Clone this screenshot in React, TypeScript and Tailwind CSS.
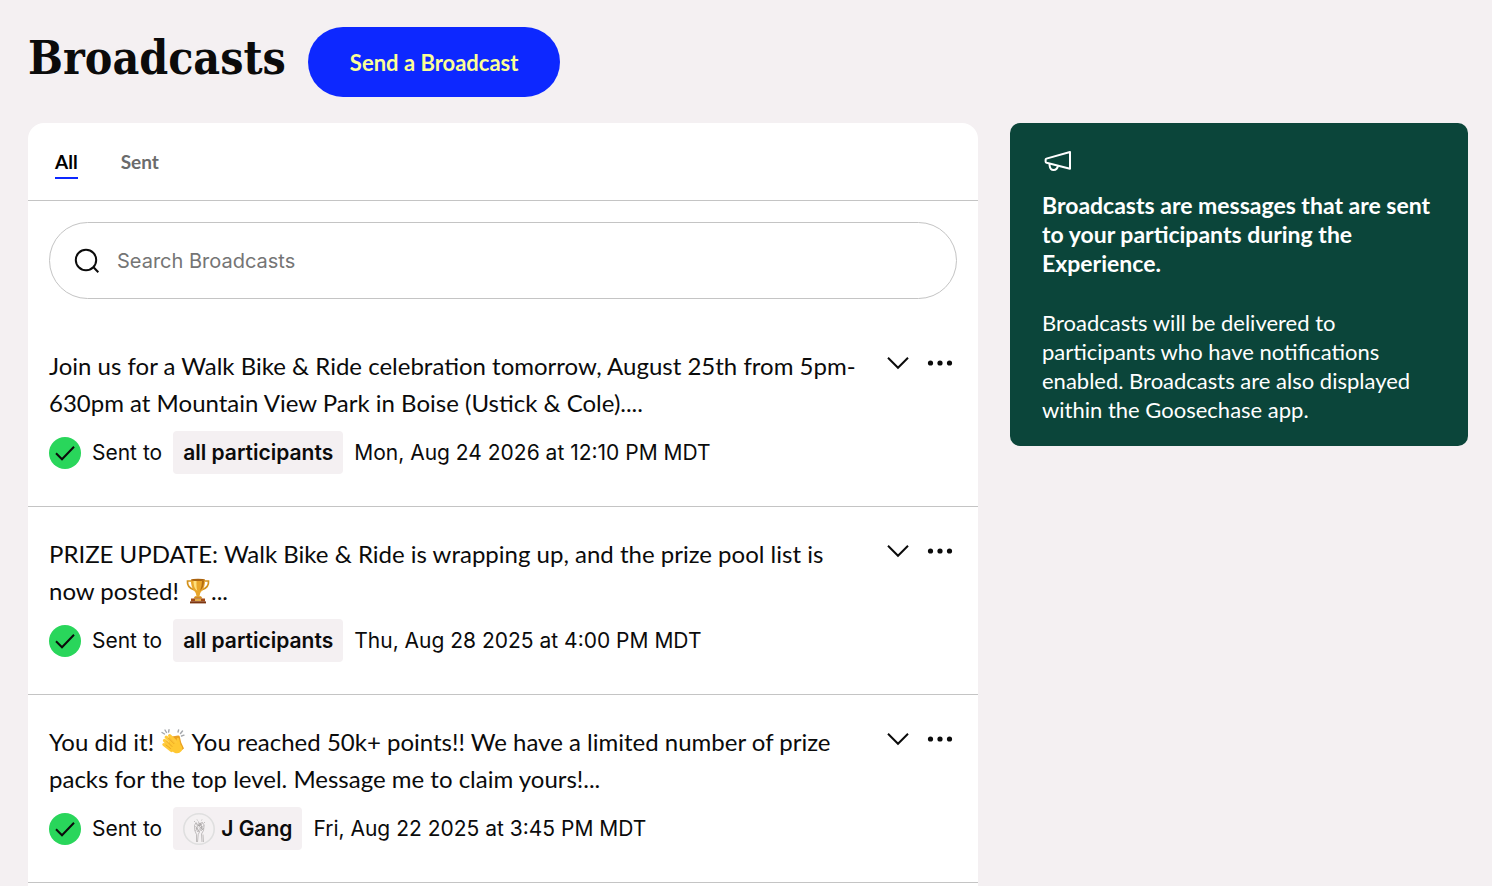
import { ReactNode } from "react";
import clsx from "clsx";

type IconProps = { className?: string };

const SearchIcon = ({ className }: IconProps) => (
  <svg viewBox="0 0 26 26" fill="none" stroke="currentColor" strokeWidth="2" className={className} aria-hidden="true">
    <circle cx="12" cy="12" r="10.2" />
    <path d="M19.5 19.3 24.3 24.3" />
  </svg>
);

const ChevronIcon = ({ className }: IconProps) => (
  <svg viewBox="0 0 22 14" fill="none" stroke="currentColor" strokeWidth="2" className={className} aria-hidden="true">
    <path d="M1 1.8 11 11.8 21 1.8" />
  </svg>
);

const DotsIcon = ({ className }: IconProps) => (
  <svg viewBox="0 0 26 6" fill="currentColor" className={className} aria-hidden="true">
    <circle cx="3.5" cy="3" r="2.6" />
    <circle cx="13" cy="3" r="2.6" />
    <circle cx="22.5" cy="3" r="2.6" />
  </svg>
);

const CheckIcon = ({ className }: IconProps) => (
  <svg viewBox="0 0 32 32" fill="none" className={className} aria-hidden="true">
    <circle cx="16" cy="16" r="16" fill="#29d65b" />
    <path d="M7 16.3 13 22.3 25 9.7" stroke="#0b0b0b" strokeWidth="2" />
  </svg>
);

const MegaphoneIcon = ({ className }: IconProps) => (
  <svg viewBox="0 0 28 22" fill="none" stroke="currentColor" strokeWidth="2" strokeLinejoin="round" className={className} aria-hidden="true">
    <path d="M26 2 2.4 8.6Q1.6 8.9 1.6 9.8V11.4Q1.6 12.4 2.6 12.7L26 18.8Z" />
    <path d="M5.6 13.6V15.6Q6.2 20 9.6 20 13.2 20 14 15.8" />
  </svg>
);

const Trophy = () => (
  <svg viewBox="0 0 24 26" className="inline-block h-[26px] w-[26px] align-[-4px]" role="img" aria-label="Trophy">
    <path d="M5.5 3H1.5Q.8 9.5 8.4 12M18.5 3H22.5Q23.2 9.5 15.6 12" fill="none" stroke="#d3921c" strokeWidth="1.7" />
    <path d="M5 1.5H19Q19.4 9.5 15.5 13.2 13.4 15 13.4 18.5H10.6Q10.6 15 8.5 13.2 4.6 9.5 5 1.5Z" fill="#e9a62a" />
    <path d="M7.5 3H10.5Q10.2 10 11.4 13 7.4 10.5 7.5 3Z" fill="#ffe07c" />
    <path d="M16 3H18Q18 9.5 14 13 16 8 16 3Z" fill="#b46d12" />
    <ellipse cx="12" cy="1.9" rx="7" ry="1.2" fill="#a96310" />
    <path d="M9 18.2H15L16.5 20.5H7.5Z" fill="#d58c1c" />
    <path d="M5 20.5H19V23.5H5Z" fill="#a34a16" />
    <path d="M9 21.2H15V22.8H9Z" fill="#f1c452" />
    <path d="M4 23.4H20V25.4H4Z" fill="#7c3510" />
  </svg>
);

const Clap = () => (
  <svg viewBox="0 0 24 26" className="inline-block h-[26px] w-[26px] align-[-4px]" role="img" aria-label="Clapping hands">
    <path d="M1 3.5 3.5 5M4 1 5.5 3.5M8 .8 7.6 3M17 3 17.6 1M19.5 4.5 21.5 2M20.5 7 23 6.2" stroke="#a3a6aa" strokeWidth="1.4" strokeLinecap="round" />
    <path d="M17 6.5Q18.8 6 19 8.5L20.2 13.5 23 19.5 17 24 8 17 8 8Z" fill="#eaa123" />
    <path d="M3.5 11.5 11.5 19.5M2.9 15.6 10.5 21.5M5.2 8.2 14 17M8.6 6.6 16.5 14.5" stroke="#ffca3a" strokeWidth="3.2" strokeLinecap="round" />
    <path d="M16 14.5 15.7 10Q16.5 7.6 18 9.6L19.5 15.5Q22.5 19 20.5 22 17.5 25.8 13 23.5L8 20 9 12Z" fill="#ffc832" />
    <path d="M5.5 12 11 17.5M7.5 9.2 13 14.7M5 16 9.5 19.5" stroke="#e39a1d" strokeWidth=".7" strokeLinecap="round" />
  </svg>
);

// Team picture: a faint pencil sketch of two raised hands
const TeamAvatar = () => (
  <svg viewBox="0 0 32 32" fill="none" className="size-8" aria-hidden="true">
    <circle cx="16" cy="16" r="15.2" fill="#f4f1f2" stroke="#dfdfdf" strokeWidth="1.6" />
    <g stroke="#8d8989" strokeWidth=".5">
      <path d="M13.5 29V21.5L11.8 17.5 11.5 12.5 13 9.5 14.5 13M14.5 29 15.2 21.5 16.5 19M19 29 18.5 21 20.5 17.5 21.2 12 19.5 9.5 17.8 13M20.5 29 20 21.5" />
      <path d="M12.5 13 16 19 20.5 12.5M13 16 17 10 19.5 17M14 10.5 18 15.5M15.5 8.5 16.5 13 18.5 9M12.5 18 15 14.5M18 18 20.5 15M14 19 19 13" />
      <path d="M11 8 12 9M14 6.5 14.5 7.5M19 6.5 18.5 7.5M22 9 21 10" />
    </g>
  </svg>
);

type Broadcast = {
  id: number;
  message: ReactNode;
  audience: string;
  avatar?: ReactNode;
  sentAt: string;
};

const broadcasts: Broadcast[] = [
  {
    id: 1,
    message:
      "Join us for a Walk Bike & Ride celebration tomorrow, August 25th from 5pm-630pm at Mountain View Park in Boise (Ustick & Cole)....",
    audience: "all participants",
    sentAt: "Mon, Aug 24 2026 at 12:10 PM MDT",
  },
  {
    id: 2,
    message: (
      <>
        PRIZE UPDATE: Walk Bike &amp; Ride is wrapping up, and the prize pool list is now posted! <Trophy />
        ...
      </>
    ),
    audience: "all participants",
    sentAt: "Thu, Aug 28 2025 at 4:00 PM MDT",
  },
  {
    id: 3,
    message: (
      <>
        You did it! <Clap /> You reached 50k+ points!! We have a limited number of prize packs for the top level.
        Message me to claim yours!...
      </>
    ),
    audience: "J Gang",
    avatar: <TeamAvatar />,
    sentAt: "Fri, Aug 22 2025 at 3:45 PM MDT",
  },
];

const BroadcastRow = ({ message, audience, avatar, sentAt }: Broadcast) => (
  <li className="border-b border-[#c4c4c4] px-[21px] pt-7 pb-8">
    <div className="flex items-start">
      <p className="min-w-0 flex-1 text-2xl leading-[37px]">{message}</p>
      <div className="flex gap-[18px] pt-1 pr-1 pl-4">
        <button type="button" aria-label="Expand broadcast" className="flex h-6 items-center">
          <ChevronIcon className="h-[14px] w-[22px]" />
        </button>
        <button type="button" aria-label="More options" className="flex h-6 items-center">
          <DotsIcon className="h-[6px] w-[26px]" />
        </button>
      </div>
    </div>
    <div className="mt-[10px] flex items-center gap-[11px] font-['Inter',sans-serif] text-[21px] leading-[30px]">
      <CheckIcon className="size-8 shrink-0" />
      <span>Sent to</span>
      <span className="flex h-[43px] items-center gap-[6px] rounded-[4px] bg-[#f4f0f2] px-[10px] font-semibold">
        {avatar}
        {audience}
      </span>
      <span>{sentAt}</span>
    </div>
  </li>
);

const Tab = ({ label, active }: { label: string; active?: boolean }) => (
  <button
    type="button"
    role="tab"
    aria-selected={!!active}
    className={clsx(
      "border-b-2 pt-1 pb-px text-[19px] leading-7 font-bold",
      active ? "border-[#0d28ff] text-black" : "border-transparent text-[#6b6b6b]"
    )}
  >
    {label}
  </button>
);

export default function App() {
  return (
    <div className="flex min-h-screen flex-col bg-[#f4f0f2] pt-[27px] pr-6 pl-7 font-['Lato',sans-serif] text-[#0b0b0b]">
      <header className="flex items-center gap-[22px]">
        <h1 className="pb-2 font-['DejaVu_Serif_Condensed','DejaVu_Serif',serif] text-[46px] leading-[50px] font-bold">
          Broadcasts
        </h1>
        <button type="button" className="h-[70px] rounded-full bg-[#0d28ff] px-[42px] text-[22px] font-bold text-[#fbff96]">
          Send a Broadcast
        </button>
      </header>

      <div className="mt-[26px] grid flex-1 grid-cols-[minmax(0,950fr)_minmax(0,458fr)] gap-8">
        <main className="rounded-t-2xl bg-white">
          <div role="tablist" className="flex h-[78px] items-center gap-[43px] border-b border-[#c4c4c4] px-[27px]">
            <Tab label="All" active />
            <Tab label="Sent" />
          </div>
          <label className="mx-[21px] mt-[21px] flex h-[77px] items-center gap-[17px] rounded-full border border-[#c4c4c4] px-6">
            <SearchIcon className="size-[26px] shrink-0" />
            <input
              type="search"
              aria-label="Search Broadcasts"
              placeholder="Search Broadcasts"
              className="min-w-0 flex-1 bg-transparent font-['Inter',sans-serif] text-xl outline-none placeholder:text-[#757575]"
            />
          </label>
          <ul className="mt-5">
            {broadcasts.map((b) => (
              <BroadcastRow key={b.id} {...b} />
            ))}
          </ul>
        </main>

        <aside className="self-start rounded-[10px] bg-[#0b453a] px-8 pt-[27px] pb-[22px] text-white">
          <MegaphoneIcon className="ml-[2px] h-[22px] w-[28px]" />
          <p className="mt-[19px] text-[23px] leading-[29px] font-bold">
            Broadcasts are messages that are sent to your participants during the Experience.
          </p>
          <p className="mt-[30px] text-[22px] leading-[29px]">
            Broadcasts will be delivered to participants who have notifications enabled. Broadcasts are also displayed
            within the Goosechase app.
          </p>
        </aside>
      </div>
    </div>
  );
}
